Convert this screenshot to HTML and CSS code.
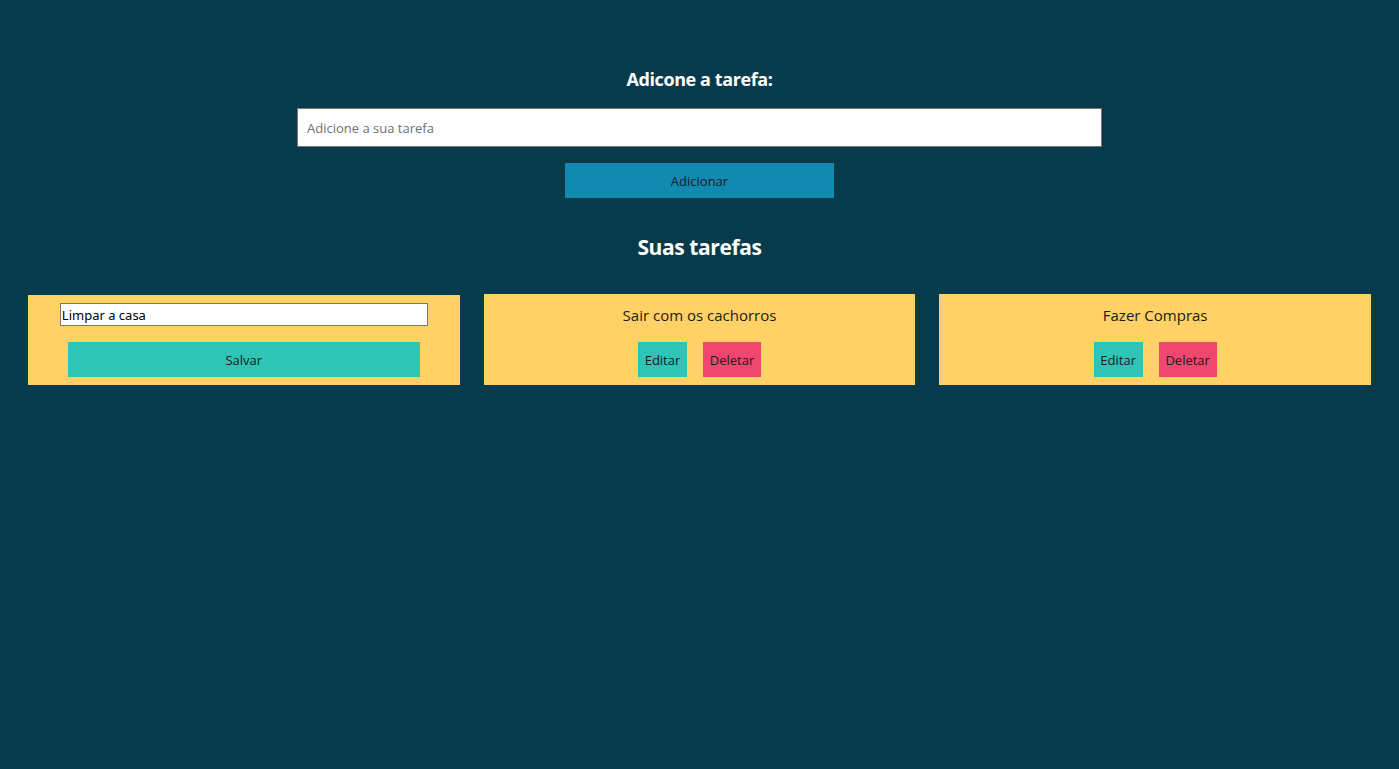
FILE: index.html
```html
<!DOCTYPE html>
<html lang="pt-BR">
<head>
	<meta charset="UTF-8">
	<title>Tarefas</title>
	<link rel="stylesheet" href="styles.css">
</head>
<body>
	<div class="add">
		<h2 class="add-title">Adicone a tarefa:</h2>
		<input class="add-input" type="text" placeholder="Adicione a sua tarefa">
		<button class="add-btn">Adicionar</button>
	</div>
	<h2 class="list-title">Suas tarefas</h2>
	<div class="list">
		<div class="card card-edit">
			<input class="edit-input" type="text" value="Limpar a casa">
			<button class="btn-save">Salvar</button>
		</div>
		<div class="card">
			<p class="card-text">Sair com os cachorros</p>
			<div class="card-actions">
				<button class="btn-edit">Editar</button>
				<button class="btn-del">Deletar</button>
			</div>
		</div>
		<div class="card">
			<p class="card-text">Fazer Compras</p>
			<div class="card-actions">
				<button class="btn-edit">Editar</button>
				<button class="btn-del">Deletar</button>
			</div>
		</div>
	</div>
</body>
</html>
```

FILE: styles.css
```css
*{padding:0; margin:0; box-sizing:border-box;}
body{background:#073b4c; font-family:"Open Sans", "Noto Sans", sans-serif; color:#1b1b1b; padding-top:66px;}
button{border:none; font-family:inherit; font-size:13px; color:#1b1b1b; cursor:pointer;}

.add{display:flex; flex-direction:column; align-items:center;}
.add-title{color:#fff; font-size:18px; font-weight:700; letter-spacing:-0.4px; line-height:26px;}
.add-input{width:805px; height:39px; margin-top:16px; border:1px solid #767676; padding:0 9px; font-family:inherit; font-size:13px; outline:none;}
.add-input::placeholder{color:#6f6f6f;}
.add-btn{width:269px; height:35px; margin-top:16px; background:#118ab2;}

.list-title{color:#fff; font-size:21px; font-weight:700; letter-spacing:-0.4px; text-align:center; margin-top:34px; line-height:30px;}

.list{display:grid; grid-template-columns:repeat(3, 1fr); gap:24px; padding:0 28px; margin-top:32px;}
.card{background:#ffd166; display:flex; flex-direction:column; align-items:center; padding:8px 0 8px; height:91px;}
.card-edit{margin-top:1px; height:90px;}
.edit-input{width:368px; height:23px; border:1px solid #767676; padding:0 1px; font-family:"Noto Sans", sans-serif; font-size:13px; color:#000;}
.btn-save{width:352px; height:35px; margin-top:16px; background:#2ec4b6;}
.card-text{font-size:15px; line-height:26px; margin-top:0;}
.card-actions{display:flex; gap:16px; margin-top:14px;}
.btn-edit{width:49px; height:35px; background:#2ec4b6;}
.btn-del{width:58px; height:35px; background:#ef476f;}
```
